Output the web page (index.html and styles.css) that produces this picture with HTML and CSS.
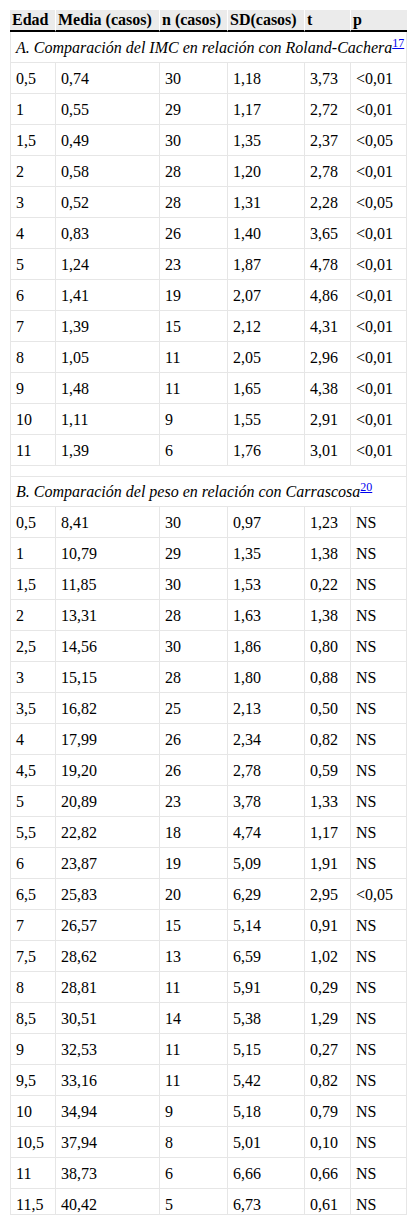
FILE: index.html
```html
<!DOCTYPE html>
<html lang="es">
<head>
<meta charset="utf-8">
<link rel="stylesheet" href="styles.css">
</head>
<body>
<div class="wrap">
<table class="tbl">
<colgroup>
<col class="c1"><col class="c2"><col class="c3"><col class="c4"><col class="c5"><col class="c6">
</colgroup>
<thead>
<tr><th>Edad</th><th>Media (casos)</th><th>n (casos)</th><th>SD(casos)</th><th>t</th><th>p</th></tr>
</thead>
<tbody>
<tr class="sec"><td colspan="6"><i>A. Comparación del IMC en relación con Roland-Cachera</i><sup><a href="#">17</a></sup></td></tr>
<tr><td>0,5</td><td>0,74</td><td>30</td><td>1,18</td><td>3,73</td><td>&lt;0,01</td></tr>
<tr><td>1</td><td>0,55</td><td>29</td><td>1,17</td><td>2,72</td><td>&lt;0,01</td></tr>
<tr><td>1,5</td><td>0,49</td><td>30</td><td>1,35</td><td>2,37</td><td>&lt;0,05</td></tr>
<tr><td>2</td><td>0,58</td><td>28</td><td>1,20</td><td>2,78</td><td>&lt;0,01</td></tr>
<tr><td>3</td><td>0,52</td><td>28</td><td>1,31</td><td>2,28</td><td>&lt;0,05</td></tr>
<tr><td>4</td><td>0,83</td><td>26</td><td>1,40</td><td>3,65</td><td>&lt;0,01</td></tr>
<tr><td>5</td><td>1,24</td><td>23</td><td>1,87</td><td>4,78</td><td>&lt;0,01</td></tr>
<tr><td>6</td><td>1,41</td><td>19</td><td>2,07</td><td>4,86</td><td>&lt;0,01</td></tr>
<tr><td>7</td><td>1,39</td><td>15</td><td>2,12</td><td>4,31</td><td>&lt;0,01</td></tr>
<tr><td>8</td><td>1,05</td><td>11</td><td>2,05</td><td>2,96</td><td>&lt;0,01</td></tr>
<tr><td>9</td><td>1,48</td><td>11</td><td>1,65</td><td>4,38</td><td>&lt;0,01</td></tr>
<tr><td>10</td><td>1,11</td><td>9</td><td>1,55</td><td>2,91</td><td>&lt;0,01</td></tr>
<tr><td>11</td><td>1,39</td><td>6</td><td>1,76</td><td>3,01</td><td>&lt;0,01</td></tr>
<tr class="gap"><td colspan="6"></td></tr>
<tr class="sec secb"><td colspan="6"><i>B. Comparación del peso en relación con Carrascosa</i><sup><a href="#">20</a></sup></td></tr>
<tr><td>0,5</td><td>8,41</td><td>30</td><td>0,97</td><td>1,23</td><td>NS</td></tr>
<tr><td>1</td><td>10,79</td><td>29</td><td>1,35</td><td>1,38</td><td>NS</td></tr>
<tr><td>1,5</td><td>11,85</td><td>30</td><td>1,53</td><td>0,22</td><td>NS</td></tr>
<tr><td>2</td><td>13,31</td><td>28</td><td>1,63</td><td>1,38</td><td>NS</td></tr>
<tr><td>2,5</td><td>14,56</td><td>30</td><td>1,86</td><td>0,80</td><td>NS</td></tr>
<tr><td>3</td><td>15,15</td><td>28</td><td>1,80</td><td>0,88</td><td>NS</td></tr>
<tr><td>3,5</td><td>16,82</td><td>25</td><td>2,13</td><td>0,50</td><td>NS</td></tr>
<tr><td>4</td><td>17,99</td><td>26</td><td>2,34</td><td>0,82</td><td>NS</td></tr>
<tr><td>4,5</td><td>19,20</td><td>26</td><td>2,78</td><td>0,59</td><td>NS</td></tr>
<tr><td>5</td><td>20,89</td><td>23</td><td>3,78</td><td>1,33</td><td>NS</td></tr>
<tr><td>5,5</td><td>22,82</td><td>18</td><td>4,74</td><td>1,17</td><td>NS</td></tr>
<tr><td>6</td><td>23,87</td><td>19</td><td>5,09</td><td>1,91</td><td>NS</td></tr>
<tr><td>6,5</td><td>25,83</td><td>20</td><td>6,29</td><td>2,95</td><td>&lt;0,05</td></tr>
<tr><td>7</td><td>26,57</td><td>15</td><td>5,14</td><td>0,91</td><td>NS</td></tr>
<tr><td>7,5</td><td>28,62</td><td>13</td><td>6,59</td><td>1,02</td><td>NS</td></tr>
<tr><td>8</td><td>28,81</td><td>11</td><td>5,91</td><td>0,29</td><td>NS</td></tr>
<tr><td>8,5</td><td>30,51</td><td>14</td><td>5,38</td><td>1,29</td><td>NS</td></tr>
<tr><td>9</td><td>32,53</td><td>11</td><td>5,15</td><td>0,27</td><td>NS</td></tr>
<tr><td>9,5</td><td>33,16</td><td>11</td><td>5,42</td><td>0,82</td><td>NS</td></tr>
<tr><td>10</td><td>34,94</td><td>9</td><td>5,18</td><td>0,79</td><td>NS</td></tr>
<tr><td>10,5</td><td>37,94</td><td>8</td><td>5,01</td><td>0,10</td><td>NS</td></tr>
<tr><td>11</td><td>38,73</td><td>6</td><td>6,66</td><td>0,66</td><td>NS</td></tr>
<tr><td>11,5</td><td>40,42</td><td>5</td><td>6,73</td><td>0,61</td><td>NS</td></tr>
</tbody>
</table>
</div>
</body>
</html>
```
FILE: styles.css
```css
html, body {
  margin: 0;
  padding: 0;
  background: #fff;
}
.wrap {
  margin: 10px 0 0 10px;
  width: 397px;
  height: 1204px;
  overflow: hidden;
  border-bottom: 1px solid #e6e6e6;
}
.tbl {
  width: 397px;
  table-layout: fixed;
  border-collapse: separate;
  border-spacing: 0;
  font-family: "Liberation Serif", "Times New Roman", serif;
  font-size: 16px;
  color: #000;
}
.c1 { width: 46px; }
.c2 { width: 104px; }
.c3 { width: 68px; }
.c4 { width: 77px; }
.c5 { width: 46px; }
.c6 { width: 56px; }
.tbl th {
  background: #ebebeb;
  font-weight: bold;
  text-align: left;
  line-height: 18px;
  height: 18px;
  padding: 1px 1px 1px 2px;
  border-bottom: 2px solid #000;
  border-right: 1px solid #fff;
  white-space: nowrap;
}
.tbl th:last-child { border-right: none; }
.tbl td {
  line-height: 18px;
  height: 18px;
  padding: 7px 4px 5px 5px;
  border-right: 1px solid #e6e6e6;
  border-bottom: 1px solid #e6e6e6;
  white-space: nowrap;
}
.tbl td:first-child { border-left: 1px solid #e6e6e6; }
.tbl tr.sec td { padding-top: 7px; padding-bottom: 5px; }
.tbl tr.gap td { height: 10px; padding: 0; line-height: 10px; }
.tbl tr.secb td { padding-top: 6px; padding-bottom: 5px; }
.tbl sup {
  font-size: 12px;
  line-height: 0;
}
.tbl sup a { color: #0000ee; text-decoration: underline; }
```
